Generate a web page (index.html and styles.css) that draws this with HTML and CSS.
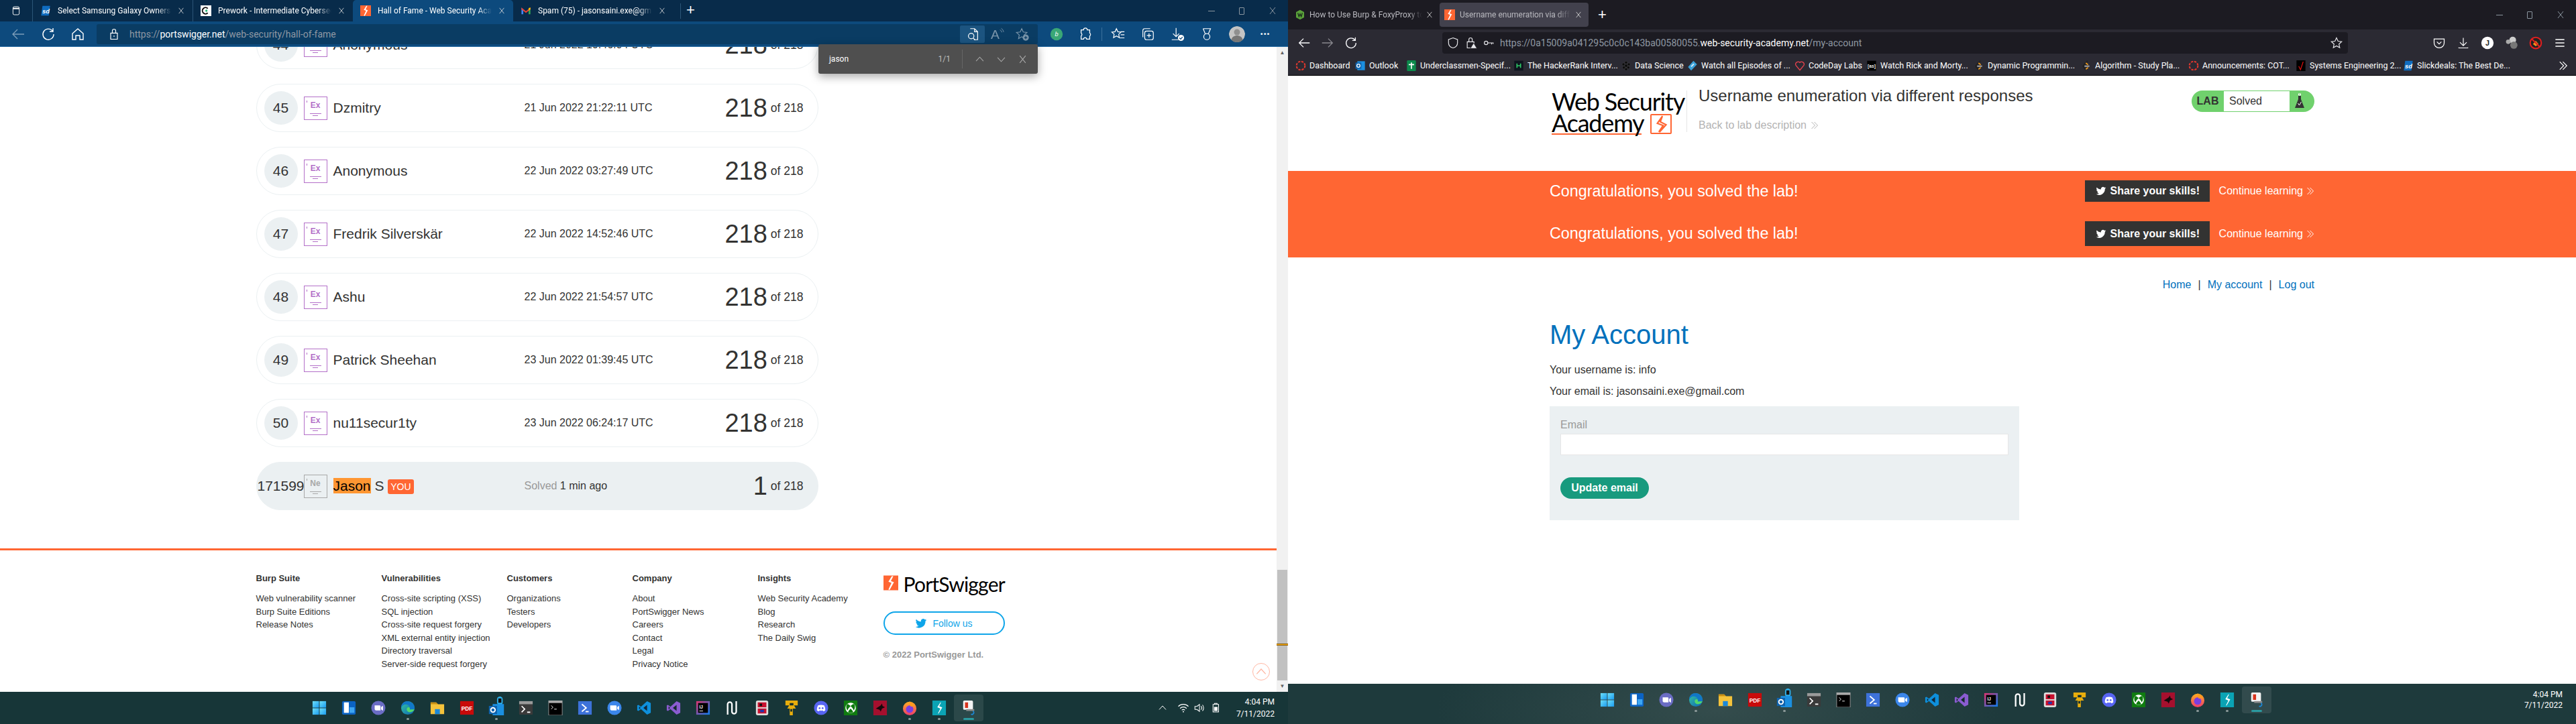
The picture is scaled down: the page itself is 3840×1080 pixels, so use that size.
FILE: index.html
```html
<!DOCTYPE html>
<html lang="en">
<head>
    <meta charset="UTF-8" />
    <title>Hall of Fame and My Account</title>
    <link rel="stylesheet" href="styles.css">
</head>
<body>
<!-- icon sprite -->
<svg class="sprite" xmlns="http://www.w3.org/2000/svg">
    <defs>
        <linearGradient id="g-win" x1="0" y1="0" x2="1" y2="1"><stop offset="0" stop-color="#6fe0f8"/><stop offset="1" stop-color="#1a9bf0"/></linearGradient>
        <linearGradient id="g-edge" x1="0" y1="0" x2="1" y2="1"><stop offset="0" stop-color="#36c8a0"/><stop offset="1" stop-color="#0b62b8"/></linearGradient>
        <linearGradient id="g-fox" x1="0" y1="0" x2="0" y2="1"><stop offset="0" stop-color="#ffb020"/><stop offset="1" stop-color="#ee3a6e"/></linearGradient>
        <linearGradient id="g-ij" x1="0" y1="0" x2="1" y2="1"><stop offset="0" stop-color="#e0336e"/><stop offset="1" stop-color="#0b7df0"/></linearGradient>
    </defs>

    <!-- browser chrome, stroke icons -->
    <symbol id="i-back" viewBox="0 0 24 24"><path d="M21 12H4M11 5l-7 7 7 7" fill="none" stroke="currentColor" stroke-width="1.4"/></symbol>
    <symbol id="i-forward" viewBox="0 0 24 24"><path d="M3 12h17M13 5l7 7-7 7" fill="none" stroke="currentColor" stroke-width="1.4"/></symbol>
    <symbol id="i-reload" viewBox="0 0 24 24"><path d="M18.5 7.5A8 8 0 1 0 20 12M19 3v5h-5" fill="none" stroke="currentColor" stroke-width="1.4"/></symbol>
    <symbol id="i-home" viewBox="0 0 24 24"><path d="M4 11l8-7 8 7v9h-5v-6H9v6H4z" fill="none" stroke="currentColor" stroke-width="1.4"/></symbol>
    <symbol id="i-lock" viewBox="0 0 24 24"><path d="M6 10h12v11H6zM9 10V6a3 3 0 0 1 6 0v4" fill="none" stroke="currentColor" stroke-width="1.4"/><circle cx="12" cy="15.500" r="1" fill="currentColor"/></symbol>
    <symbol id="i-lockwarn" viewBox="0 0 24 24"><path d="M5 10h12v11H5zM8 10V6a3 3 0 0 1 6 0v4" fill="none" stroke="currentColor" stroke-width="1.4"/><path d="M16.500 12l6 10h-12z" fill="currentColor" stroke="#1c1b22"/></symbol>
    <symbol id="i-shield" viewBox="0 0 24 24"><path d="M12 3l8 3v6c0 5-4 8-8 9-4-1-8-4-8-9V6z" fill="none" stroke="currentColor" stroke-width="1.4"/></symbol>
    <symbol id="i-key" viewBox="0 0 24 24"><circle cx="7" cy="12" r="3.500" fill="none" stroke="currentColor" stroke-width="1.500"/><path d="M10.500 12H22M18 12v3M21 12v2" fill="none" stroke="currentColor" stroke-width="1.500"/></symbol>
    <symbol id="i-star" viewBox="0 0 24 24"><path d="M12 3l2.800 6 6.400.700-4.800 4.400 1.300 6.400L12 17.300 6.300 20.500l1.300-6.400L2.800 9.700 9.200 9z" fill="none" stroke="currentColor" stroke-width="1.400"/></symbol>
    <symbol id="i-pocket" viewBox="0 0 24 24"><path d="M3 5h18v7a9 9 0 0 1-18 0z" fill="none" stroke="currentColor" stroke-width="1.500"/><path d="M8 10l4 4 4-4" fill="none" stroke="currentColor" stroke-width="1.500"/></symbol>
    <symbol id="i-download" viewBox="0 0 24 24"><path d="M12 3v14M6 11l6 6 6-6M4 20v1h16v-1" fill="none" stroke="currentColor" stroke-width="1.400"/></symbol>
    <symbol id="i-menu" viewBox="0 0 24 24"><path d="M4 6h16M4 12h16M4 18h16" fill="none" stroke="currentColor" stroke-width="1.600"/></symbol>
    <symbol id="i-docsearch" viewBox="0 0 24 24"><path d="M8 3h7l5 5v13h-6M15 3v5h5" fill="none" stroke="currentColor" stroke-width="1.300"/><circle cx="9.500" cy="15" r="4.500" fill="none" stroke="currentColor" stroke-width="1.300"/><path d="M13 18.500l3 3" stroke="currentColor" stroke-width="1.300"/></symbol>
    <symbol id="i-aloud" viewBox="0 0 24 24"><text x="1" y="20" font-family="Liberation Sans, sans-serif" font-size="21" fill="currentColor">A</text><path d="M16 5a5 5 0 0 1 3 4M18 2.500a8 8 0 0 1 4 6" fill="none" stroke="currentColor"/></symbol>
    <symbol id="i-starplus" viewBox="0 0 24 24"><path d="M11 3l2.500 5.500 6 .7-4.500 4 1.200 6L11 16.200 5.800 19.200l1.200-6-4.500-4 6-.7z" fill="none" stroke="currentColor" stroke-width="1.300"/><circle cx="17.500" cy="17.500" r="5" fill="currentColor"/><path d="M17.500 15v5M15 17.500h5" stroke="#0a3c63" stroke-width="1.300"/></symbol>
    <symbol id="i-puzzle" viewBox="0 0 24 24"><path d="M9 5a3 3 0 0 1 6 0h4v5a3 3 0 0 1 0 5v5h-5a2.500 2.500 0 0 0-5 0H5v-5a3 3 0 0 0 0-5V5z" fill="none" stroke="currentColor" stroke-width="1.400"/></symbol>
    <symbol id="i-favlist" viewBox="0 0 24 24"><path d="M9 3l2.300 5 5.200.6-3.800 3.600 1 5.300L9 15l-4.700 2.500 1-5.300L1.500 8.600 6.700 8z" fill="none" stroke="currentColor" stroke-width="1.300"/><path d="M16 8h6M16 13h6M14 18h8" stroke="currentColor" stroke-width="1.300"/></symbol>
    <symbol id="i-collect" viewBox="0 0 24 24"><rect x="7" y="7" width="14" height="14" rx="3" fill="none" stroke="currentColor" stroke-width="1.300"/><path d="M14 10.500v7M10.500 14h7M4 17V6a3 3 0 0 1 3-3h9" fill="none" stroke="currentColor" stroke-width="1.300"/></symbol>
    <symbol id="i-dlcheck" viewBox="0 0 24 24"><path d="M10 2v14M5 11l5 5 5-5M3 21h11" fill="none" stroke="currentColor" stroke-width="1.300"/><circle cx="18" cy="18" r="5" fill="currentColor"/><path d="M15.500 18l2 2 3-3.500" fill="none" stroke="#0d4a7d" stroke-width="1.400"/></symbol>
    <symbol id="i-medal" viewBox="0 0 24 24"><circle cx="12" cy="16" r="5" fill="none" stroke="currentColor" stroke-width="1.300"/><path d="M6 3h12l-3.500 8.500M6 3l3.500 8.500M9 3h6" fill="none" stroke="currentColor" stroke-width="1.300"/></symbol>
    <symbol id="i-sidebar" viewBox="0 0 24 24"><rect x="5" y="3" width="14" height="18" rx="3" fill="none" stroke="currentColor" stroke-width="1.400"/><path d="M5 7h14" stroke="currentColor" stroke-width="3"/></symbol>
    <symbol id="i-x" viewBox="0 0 12 12"><path d="M2 1l8 10M10 1L2 11" fill="none" stroke="currentColor" stroke-width="1"/></symbol>
    <symbol id="i-up" viewBox="0 0 12 12"><path d="M1 8.500l5-5.500 5 5.500" fill="none" stroke="currentColor" stroke-width="1"/></symbol>
    <symbol id="i-down" viewBox="0 0 12 12"><path d="M1 3.500L6 9l5-5.500" fill="none" stroke="currentColor" stroke-width="1"/></symbol>
    <symbol id="i-dchev" viewBox="0 0 12 12"><path d="M1.500 1l5 5-5 5M5.500 1l5 5-5 5" fill="none" stroke="currentColor" stroke-width="1"/></symbol>
    <symbol id="i-twitter" viewBox="0 0 24 24"><path d="M23 5c-.8.400-1.700.600-2.600.700.900-.600 1.600-1.400 2-2.500-.9.500-1.900.900-2.900 1.100a4.500 4.500 0 0 0-7.700 4.100C8 8.200 4.700 6.400 2.500 3.700a4.500 4.500 0 0 0 1.400 6c-.7 0-1.400-.200-2-.600 0 2.200 1.500 4 3.600 4.500-.7.200-1.400.2-2 .100.600 1.800 2.200 3.100 4.200 3.100A9 9 0 0 1 1 18.700 12.800 12.800 0 0 0 20.700 7.300c.900-.600 1.700-1.400 2.300-2.300z" fill="currentColor"/></symbol>

    <!-- favicons and bookmarks -->
    <symbol id="f-ps" viewBox="0 0 24 24"><rect width="24" height="24" fill="#ff6633"/><path d="M13.500 1L8 10l5 2-5 11 2 .5L17 11l-5-2 4-8z" fill="#fff"/></symbol>
    <symbol id="f-sd" viewBox="0 0 24 24"><path d="M5 1h17l-3 22H2z" fill="#0f6cc0"/><text x="4.500" y="18" font-family="Liberation Sans, sans-serif" font-size="14" font-weight="700" font-style="italic" fill="#fff">sd</text></symbol>
    <symbol id="f-c" viewBox="0 0 24 24"><rect width="24" height="24" fill="#fff"/><path d="M16 7a7 7 0 1 0 0 10" fill="none" stroke="#111" stroke-width="3"/><circle cx="13" cy="12" r="2.500" fill="#2cb57c"/></symbol>
    <symbol id="f-gmail" viewBox="0 0 24 24"><path d="M2 5v15h4V10z" fill="#4285f4"/><path d="M22 5v15h-4V10z" fill="#34a853"/><path d="M2 5l10 8 10-8v4l-10 8L2 9z" fill="#ea4335"/><path d="M18 6l4-1v4l-4 3z" fill="#fbbc04"/></symbol>
    <symbol id="f-hex" viewBox="0 0 24 24"><path d="M12 1l9 5v12l-9 5-9-5V6z" fill="#5aa13a"/><path d="M7 8l2.500 8L12 10l2.500 6L17 8" fill="none" stroke="#17261a" stroke-width="2"/></symbol>
    <symbol id="f-ring" viewBox="0 0 24 24"><circle cx="12" cy="12" r="9.500" fill="none" stroke="#e2382e" stroke-width="3" stroke-dasharray="5 2.500"/></symbol>
    <symbol id="f-outlook" viewBox="0 0 24 24"><rect x="5" y="2" width="17" height="20" fill="#1b8fe0"/><rect x="1" y="5" width="13" height="14" fill="#0f62ac"/><circle cx="7.500" cy="12" r="3.500" fill="none" stroke="#fff" stroke-width="2"/></symbol>
    <symbol id="f-green" viewBox="0 0 24 24"><rect x="2" width="20" height="24" rx="2" fill="#0c8a4c"/><path d="M12 5v14M6 9.500h12" stroke="#fff" stroke-width="2.500"/></symbol>
    <symbol id="f-hr" viewBox="0 0 24 24"><rect x="2" y="1" width="20" height="22" fill="#0e141e"/><path d="M8 7v10M16 7v10M8 12h8" stroke="#2ec866" stroke-width="2.500"/></symbol>
    <symbol id="f-dots" viewBox="0 0 24 24"><g fill="#0b0b0b" stroke="#555" stroke-width=".5"><circle cx="12" cy="5" r="3"/><circle cx="6" cy="9" r="3"/><circle cx="18" cy="9" r="3"/><circle cx="12" cy="12" r="3.500"/><circle cx="7" cy="16" r="3"/><circle cx="17" cy="16" r="3"/><circle cx="12" cy="20" r="3"/></g></symbol>
    <symbol id="f-diamond" viewBox="0 0 24 24"><path d="M14 1l8 8-13 14-7-8z" fill="#3aa0d8"/><path d="M8 13l6-6 2 2-6 6z" fill="#d6eefa"/></symbol>
    <symbol id="f-heart" viewBox="0 0 24 24"><path d="M12 22L3 11a5.500 5.500 0 0 1 9-6 5.500 5.500 0 0 1 9 6z" fill="none" stroke="#e8424e" stroke-width="2"/></symbol>
    <symbol id="f-bs" viewBox="0 0 24 24"><rect x="2" y="1" width="20" height="22" fill="#000"/><text x="12" y="16" text-anchor="middle" font-family="Liberation Sans, sans-serif" font-size="10" font-weight="700" fill="#eee">[as]</text></symbol>
    <symbol id="f-leet" viewBox="0 0 24 24"><path d="M15 1L6 11a3 3 0 0 0 0 4l5 6" fill="none" stroke="#222" stroke-width="3"/><path d="M8 13h11" stroke="#bbb" stroke-width="2.500"/><path d="M11 6l5 4M11 20l5-4" stroke="#f89f1b" stroke-width="2.500"/></symbol>
    <symbol id="f-vz" viewBox="0 0 24 24"><rect x="2" y="0" width="20" height="24" fill="#000"/><path d="M7 13l4 8 6-18" fill="none" stroke="#e01010" stroke-width="1.800"/></symbol>
    <symbol id="f-balls" viewBox="0 0 24 24"><circle cx="14" cy="7" r="6" fill="#ccc"/><circle cx="16" cy="16" r="6.500" fill="#777"/><circle cx="6" cy="10" r="4" fill="#aaa"/></symbol>
    <symbol id="f-noscript" viewBox="0 0 24 24"><circle cx="12" cy="12" r="10" fill="#222" stroke="#e01f1f" stroke-width="2.500"/><path d="M7 14l5-6 5 6-5 4z" fill="#f0921e"/><path d="M5 5l14 14" stroke="#e01f1f" stroke-width="2.500"/></symbol>
    <symbol id="f-j" viewBox="0 0 24 24"><circle cx="12" cy="12" r="11" fill="#fff"/><text x="12" y="17" text-anchor="middle" font-family="Liberation Sans, sans-serif" font-size="13" font-weight="700" fill="#222">J</text></symbol>
    <symbol id="f-bing" viewBox="0 0 24 24"><circle cx="12" cy="12" r="11" fill="#3aa776"/><text x="12" y="16" text-anchor="middle" font-family="Liberation Sans, sans-serif" font-size="11" font-style="italic" fill="#fff">b</text></symbol>
    <symbol id="f-face" viewBox="0 0 24 24"><circle cx="12" cy="12" r="12" fill="#c4c4c4"/><circle cx="12" cy="9" r="4.500" fill="#8f8f8f"/><path d="M3 22c1-6 5-8 9-8s8 2 9 8a12 12 0 0 1-18 0z" fill="#777"/></symbol>

    <!-- taskbar -->
    <symbol id="t-start" viewBox="0 0 24 24"><g fill="url(#g-win)"><rect x="1" y="1" width="10.500" height="10.500"/><rect x="12.500" y="1" width="10.500" height="10.500"/><rect x="1" y="12.500" width="10.500" height="10.500"/><rect x="12.500" y="12.500" width="10.500" height="10.500"/></g></symbol>
    <symbol id="t-widgets" viewBox="0 0 24 24"><rect x="1" y="1" width="22" height="22" rx="2" fill="#0b63c4"/><rect x="4" y="3" width="8" height="17" fill="#fff"/><rect x="13" y="11" width="8" height="9" fill="#3ea6f2"/></symbol>
    <symbol id="t-teams" viewBox="0 0 24 24"><circle cx="12" cy="12" r="11.500" fill="#6a6cc4"/><path d="M6 8h8a1.500 1.500 0 0 1 1.500 1.500V16H8a2 2 0 0 1-2-2zM16.500 10.500l3-2v8l-3-2z" fill="#fff"/></symbol>
    <symbol id="t-edge" viewBox="0 0 24 24"><circle cx="12" cy="12" r="11" fill="url(#g-edge)"/><path d="M23 14c-2 5-8 6-11 4-3-2-2-7 1-7 2 0 3 2 2 3.500h8z" fill="#52d86c"/><path d="M11 1C5 1 1 6 1 12c2-5 7-7 11-5 4 2 4 6 3 7.500l8-.5c.5-7-5-13-12-13z" fill="#1177c8"/></symbol>
    <symbol id="t-folder" viewBox="0 0 24 24"><path d="M1 3h9l3 3h10v16H1z" fill="#f5c33b"/><path d="M1 3h9l3 3H1z" fill="#c98f12"/><rect x="8" y="14" width="8" height="8" fill="#1b88d8"/></symbol>
    <symbol id="t-pdf" viewBox="0 0 24 24"><rect x="1" y="1" width="22" height="22" fill="#c80a0a"/><text x="12" y="16" text-anchor="middle" font-family="Liberation Sans, sans-serif" font-size="9" font-weight="700" fill="#fff">PDF</text></symbol>
    <symbol id="t-outlook" viewBox="0 0 24 30"><rect x="13" y="0" width="9" height="14" rx="4.500" fill="#2fb4f0"/><rect x="15" y="3" width="5" height="7" fill="#111"/><rect x="6" y="12" width="18" height="18" fill="#1b8fe0"/><rect x="0" y="15" width="13" height="13" fill="#0f62ac"/><circle cx="6.500" cy="21.500" r="3.500" fill="none" stroke="#fff" stroke-width="2"/></symbol>
    <symbol id="t-term" viewBox="0 0 24 24"><rect x="1" y="1" width="22" height="22" rx="1" fill="#3a3a3a"/><rect x="1" y="1" width="22" height="5" fill="#9a9a9a"/><path d="M5 9l5 5-5 5" fill="none" stroke="#fff" stroke-width="1.800"/><path d="M14 19h5" stroke="#fff" stroke-width="2"/></symbol>
    <symbol id="t-cmd" viewBox="0 0 24 24"><rect x="1" y="0" width="22" height="24" fill="#000" stroke="#999"/><rect x="1" y="0" width="22" height="4" fill="#aaa"/><path d="M5 8l3 3-3 3M10 14h4" fill="none" stroke="#fff"/></symbol>
    <symbol id="t-ps" viewBox="0 0 24 24"><path d="M1 1h22v22H1z" fill="#3d72da"/><path d="M7 6l7 6-7 6" fill="none" stroke="#fff" stroke-width="2"/><path d="M13 18h5" stroke="#fff" stroke-width="2"/></symbol>
    <symbol id="t-zoom" viewBox="0 0 24 24"><circle cx="12" cy="12" r="11.500" fill="#3b86ea"/><path d="M5 8h9a1.500 1.500 0 0 1 1.500 1.500V16H7a2 2 0 0 1-2-2zM16.500 10.500l3-2v7l-3-2z" fill="#fff"/></symbol>
    <symbol id="t-vscode" viewBox="0 0 24 24"><path d="M17 1l6 3v16l-6 3L7 14l-4 3-2-1V8l2-1 4 3z" fill="#0e90dc"/><path d="M17 7l-6 5 6 5z" fill="#11283c"/><path d="M4 9.500v5l2.500-2.500z" fill="#11283c"/></symbol>
    <symbol id="t-vs" viewBox="0 0 24 24"><path d="M17 1l6 3v16l-6 3L7 14l-4 3-2-1V8l2-1 4 3z" fill="#8a5cd0"/><path d="M17 7l-6 5 6 5z" fill="#142a2c"/><path d="M4 9.500v5l2.500-2.500z" fill="#142a2c"/></symbol>
    <symbol id="t-ij" viewBox="0 0 24 24"><rect x="1" y="1" width="22" height="22" fill="url(#g-ij)"/><rect x="4" y="4" width="16" height="16" fill="#000"/><text x="6" y="13" font-family="Liberation Sans, sans-serif" font-size="7" font-weight="700" fill="#fff">IJ</text><path d="M6 17h6" stroke="#fff"/></symbol>
    <symbol id="t-wave" viewBox="0 0 24 24"><path d="M4 23V6a3.500 3.500 0 0 1 7 0v12a3.500 3.500 0 0 0 7 0 V1" fill="none" stroke="#fff" stroke-width="2.500"/></symbol>
    <symbol id="t-tool" viewBox="0 0 24 24"><rect x="2" y="0" width="20" height="24" rx="3" fill="#ddd"/><rect x="5" y="3" width="14" height="8" fill="#c8102e"/><rect x="5" y="13" width="14" height="8" fill="#c8102e"/><rect x="9" y="15" width="6" height="4" fill="#2233aa"/><rect x="8" y="5" width="4" height="4" fill="#111"/></symbol>
    <symbol id="t-yellow" viewBox="0 0 24 24"><path d="M2 0h20v8h-6l3 5h-5v11H9V13H5l3-5H2z" fill="#e8ae0c"/><path d="M9 4h6v4H9zM10 14h3v4h-3z" fill="#16302f"/></symbol>
    <symbol id="t-discord" viewBox="0 0 24 24"><circle cx="12" cy="12" r="11.500" fill="#5865f2"/><path d="M7 8c3-1.300 7-1.300 10 0 1.300 2.500 2 5 1.800 8-1.200.9-2.400 1.300-3.400 1.500l-.8-1.300c-1.700.4-3.500.4-5.200 0l-.8 1.300c-1-.2-2.200-.6-3.400-1.500C5 13 5.700 10.500 7 8z" fill="#fff"/><circle cx="9.500" cy="12.500" r="1.500" fill="#5865f2"/><circle cx="14.500" cy="12.500" r="1.500" fill="#5865f2"/></symbol>
    <symbol id="t-xbox" viewBox="0 0 24 24"><rect x="1" y="0" width="22" height="24" fill="#107c10"/><circle cx="12" cy="12" r="8.500" fill="#fff"/><path d="M12 9C9 6 7 5 6 6c-2 3-1 8 1 10 1-3 3-5 5-7zM12 9c3-3 5-4 6-3 2 3 1 8-1 10-1-3-3-5-5-7zM12 13c-2 2-4 4-4 6 2 1.500 6 1.500 8 0 0-2-2-4-4-6z" fill="#107c10"/></symbol>
    <symbol id="t-maroon" viewBox="0 0 24 24"><rect x="1" y="0" width="22" height="24" fill="#a5102e"/><path d="M5 13l8-5 2-3 1 4 4 2-5 2-2 5-2-3z" fill="#14090b"/></symbol>
    <symbol id="t-firefox" viewBox="0 0 24 24"><circle cx="12" cy="13" r="11" fill="url(#g-fox)"/><circle cx="12" cy="14" r="6" fill="#7a3ee0"/><path d="M12 1c3 3 6 3 9 7l-7 2c-2-3-3-6-2-9z" fill="#ff9a1f"/></symbol>
    <symbol id="t-teal" viewBox="0 0 24 24"><rect x="1" y="0" width="22" height="24" fill="#0ba3b4"/><path d="M14 3l-5 8 5 2-4 8 1 .3 6-10-5-2 3-6z" fill="#fff"/></symbol>
    <symbol id="t-paint" viewBox="0 0 24 24"><rect x="3" y="0" width="16" height="15" rx="2" fill="#f4f4f4"/><rect x="6" y="3" width="5" height="9" fill="#d8341e"/><rect x="8" y="14" width="13" height="3" fill="#8d8d8d"/><path d="M19 17c2 2 2 3 0 5-1 1-2 1-3 0" fill="none" stroke="#1b88d8" stroke-width="2"/></symbol>

    <!-- system tray -->
    <symbol id="t-wifi" viewBox="0 0 24 24"><path d="M2 9a14 14 0 0 1 20 0M5.500 13a9 9 0 0 1 13 0M9 16.500a4 4 0 0 1 6 0" fill="none" stroke="currentColor" stroke-width="1.500"/><circle cx="12" cy="19.500" r="1.300" fill="currentColor"/></symbol>
    <symbol id="t-sound" viewBox="0 0 24 24"><path d="M3 9h4l5-4v14l-5-4H3z" fill="none" stroke="currentColor" stroke-width="1.400"/><path d="M15 8.500a5 5 0 0 1 0 7M18 6a9 9 0 0 1 0 12" fill="none" stroke="currentColor" stroke-width="1.400"/></symbol>
    <symbol id="t-battery" viewBox="0 0 24 24"><path d="M7 5h11v15H7zM10 3h5v2h-5z" fill="none" stroke="currentColor" stroke-width="1.400"/><rect x="9" y="10" width="7" height="8" fill="currentColor"/></symbol>
</svg>

<div class="desktop">

    <!-- left window, Edge -->
    <section class="win edge">
        <div class="edge-tabs">
            <div class="edge-side"><svg class="ic16"><use href="#i-sidebar"/></svg></div>
            <div class="edge-tab sep"><svg class="fav"><use href="#f-sd"/></svg><span class="tab-title">Select Samsung Galaxy Owners: Sa</span><svg class="tab-x"><use href="#i-x"/></svg></div>
            <div class="edge-tab sep"><svg class="fav"><use href="#f-c"/></svg><span class="tab-title">Prework - Intermediate Cybersecurity</span><svg class="tab-x"><use href="#i-x"/></svg></div>
            <div class="edge-tab active"><svg class="fav"><use href="#f-ps"/></svg><span class="tab-title">Hall of Fame - Web Security Academy</span><svg class="tab-x"><use href="#i-x"/></svg></div>
            <div class="edge-tab"><svg class="fav"><use href="#f-gmail"/></svg><span class="tab-title">Spam (75) - jasonsaini.exe@gmail.com</span><svg class="tab-x"><use href="#i-x"/></svg></div>
            <div class="new-tab edge-new">+</div>
            <div class="win-btns edge-btns">
                <span class="win-min"></span><span class="win-max"></span><svg class="win-x"><use href="#i-x"/></svg>
            </div>
        </div>
        <div class="edge-bar">
            <svg class="ic24 dim nav-back"><use href="#i-back"/></svg>
            <svg class="ic24 nav-reload"><use href="#i-reload"/></svg>
            <svg class="ic24 nav-home"><use href="#i-home"/></svg>
            <div class="edge-url">
                <svg class="ic20 url-lock"><use href="#i-lock"/></svg>
                <span class="url-text"><i>https://</i>portswigger.net<i>/web-security/hall-of-fame</i></span>
                <span class="url-tools">
                    <span class="url-tool on"><svg class="ic22"><use href="#i-docsearch"/></svg></span>
                    <span class="url-tool dim"><svg class="ic22"><use href="#i-aloud"/></svg></span>
                    <span class="url-tool dim"><svg class="ic22"><use href="#i-starplus"/></svg></span>
                </span>
            </div>
            <div class="edge-extras">
                <svg class="ic20"><use href="#f-bing"/></svg>
                <svg class="ic22"><use href="#i-puzzle"/></svg>
                <span class="extras-sep"></span>
                <svg class="ic22"><use href="#i-favlist"/></svg>
                <svg class="ic22"><use href="#i-collect"/></svg>
                <svg class="ic22"><use href="#i-dlcheck"/></svg>
                <svg class="ic22"><use href="#i-medal"/></svg>
                <svg class="ic24 round"><use href="#f-face"/></svg>
                <span class="dots">&middot;&middot;&middot;</span>
            </div>
        </div>
        <div class="find-bar">
            <span class="find-term">jason</span>
            <span class="find-count">1/1</span>
            <span class="find-sep"></span>
            <svg class="find-ic"><use href="#i-up"/></svg>
            <svg class="find-ic"><use href="#i-down"/></svg>
            <svg class="find-ic"><use href="#i-x"/></svg>
        </div>

        <div class="edge-body">
            <main class="hof-page">
                <div class="container hof-list">
                    <div class="hof-row">
                        <div class="rank">44</div>
                        <div class="badge"><b>Ex</b><i></i><u></u></div>
                        <div class="who">Anonymous</div>
                        <div class="when">21 Jun 2022 19:46:04 UTC</div>
                        <div class="score"><strong>218</strong><span>of 218</span></div>
                    </div>
                    <div class="hof-row">
                        <div class="rank">45</div>
                        <div class="badge"><b>Ex</b><i></i><u></u></div>
                        <div class="who">Dzmitry</div>
                        <div class="when">21 Jun 2022 21:22:11 UTC</div>
                        <div class="score"><strong>218</strong><span>of 218</span></div>
                    </div>
                    <div class="hof-row">
                        <div class="rank">46</div>
                        <div class="badge"><b>Ex</b><i></i><u></u></div>
                        <div class="who">Anonymous</div>
                        <div class="when">22 Jun 2022 03:27:49 UTC</div>
                        <div class="score"><strong>218</strong><span>of 218</span></div>
                    </div>
                    <div class="hof-row">
                        <div class="rank">47</div>
                        <div class="badge"><b>Ex</b><i></i><u></u></div>
                        <div class="who">Fredrik Silverskär</div>
                        <div class="when">22 Jun 2022 14:52:46 UTC</div>
                        <div class="score"><strong>218</strong><span>of 218</span></div>
                    </div>
                    <div class="hof-row">
                        <div class="rank">48</div>
                        <div class="badge"><b>Ex</b><i></i><u></u></div>
                        <div class="who">Ashu</div>
                        <div class="when">22 Jun 2022 21:54:57 UTC</div>
                        <div class="score"><strong>218</strong><span>of 218</span></div>
                    </div>
                    <div class="hof-row">
                        <div class="rank">49</div>
                        <div class="badge"><b>Ex</b><i></i><u></u></div>
                        <div class="who">Patrick Sheehan</div>
                        <div class="when">23 Jun 2022 01:39:45 UTC</div>
                        <div class="score"><strong>218</strong><span>of 218</span></div>
                    </div>
                    <div class="hof-row">
                        <div class="rank">50</div>
                        <div class="badge"><b>Ex</b><i></i><u></u></div>
                        <div class="who">nu11secur1ty</div>
                        <div class="when">23 Jun 2022 06:24:17 UTC</div>
                        <div class="score"><strong>218</strong><span>of 218</span></div>
                    </div>
                    <div class="hof-row me">
                        <div class="rank">171599</div>
                        <div class="badge newbie"><b>Ne</b><i></i><u></u></div>
                        <div class="who"><mark>Jason</mark> S <span class="you">YOU</span></div>
                        <div class="when"><em>Solved</em> 1 min ago</div>
                        <div class="score"><strong>1</strong><span>of 218</span></div>
                    </div>
                </div>

                <footer class="site-foot">
                    <div class="container foot-grid">
                        <div class="foot-col">
                            <h4>Burp Suite</h4>
                            <a>Web vulnerability scanner</a>
                            <a>Burp Suite Editions</a>
                            <a>Release Notes</a>
                        </div>
                        <div class="foot-col">
                            <h4>Vulnerabilities</h4>
                            <a>Cross-site scripting (XSS)</a>
                            <a>SQL injection</a>
                            <a>Cross-site request forgery</a>
                            <a>XML external entity injection</a>
                            <a>Directory traversal</a>
                            <a>Server-side request forgery</a>
                        </div>
                        <div class="foot-col">
                            <h4>Customers</h4>
                            <a>Organizations</a>
                            <a>Testers</a>
                            <a>Developers</a>
                        </div>
                        <div class="foot-col">
                            <h4>Company</h4>
                            <a>About</a>
                            <a>PortSwigger News</a>
                            <a>Careers</a>
                            <a>Contact</a>
                            <a>Legal</a>
                            <a>Privacy Notice</a>
                        </div>
                        <div class="foot-col">
                            <h4>Insights</h4>
                            <a>Web Security Academy</a>
                            <a>Blog</a>
                            <a>Research</a>
                            <a>The Daily Swig</a>
                        </div>
                        <div class="foot-brand">
                            <div class="ps-logo"><svg class="ps-mark"><use href="#f-ps"/></svg><span>PortSwigger</span></div>
                            <div class="follow"><svg class="ic18"><use href="#i-twitter"/></svg>Follow us</div>
                            <div class="copy">&copy; 2022 PortSwigger Ltd.</div>
                        </div>
                    </div>
                </footer>
                <div class="to-top"><svg class="to-top-ic"><use href="#i-up"/></svg></div>
            </main>
            <aside class="scrollbar">
                <div class="scroll-arrow">&#9650;</div>
                <div class="scroll-thumb"></div>
                <div class="scroll-arrow">&#9660;</div>
                <div class="scroll-mark"></div>
            </aside>
        </div>

        <div class="taskbar">
            <div></div>
            <div class="tb-icons">
                <span class="tb-item"><svg><use href="#t-start"/></svg></span>
                <span class="tb-item"><svg><use href="#t-widgets"/></svg></span>
                <span class="tb-item"><svg><use href="#t-teams"/></svg></span>
                <span class="tb-item run"><svg><use href="#t-edge"/></svg></span>
                <span class="tb-item"><svg><use href="#t-folder"/></svg></span>
                <span class="tb-item"><svg><use href="#t-pdf"/></svg></span>
                <span class="tb-item run"><svg class="tb-tall"><use href="#t-outlook"/></svg></span>
                <span class="tb-item"><svg><use href="#t-term"/></svg></span>
                <span class="tb-item"><svg><use href="#t-cmd"/></svg></span>
                <span class="tb-item"><svg><use href="#t-ps"/></svg></span>
                <span class="tb-item"><svg><use href="#t-zoom"/></svg></span>
                <span class="tb-item"><svg><use href="#t-vscode"/></svg></span>
                <span class="tb-item"><svg><use href="#t-vs"/></svg></span>
                <span class="tb-item"><svg><use href="#t-ij"/></svg></span>
                <span class="tb-item"><svg><use href="#t-wave"/></svg></span>
                <span class="tb-item"><svg><use href="#t-tool"/></svg></span>
                <span class="tb-item"><svg><use href="#t-yellow"/></svg></span>
                <span class="tb-item"><svg><use href="#t-discord"/></svg></span>
                <span class="tb-item"><svg><use href="#t-xbox"/></svg></span>
                <span class="tb-item"><svg><use href="#t-maroon"/></svg></span>
                <span class="tb-item run"><svg><use href="#t-firefox"/></svg></span>
                <span class="tb-item run"><svg><use href="#t-teal"/></svg></span>
                <span class="tb-item current"><svg><use href="#t-paint"/></svg></span>
            </div>
            <div class="tb-tray">
                <svg class="tray-chev"><use href="#i-up"/></svg>
                <svg class="tray-ic"><use href="#t-wifi"/></svg>
                <svg class="tray-ic"><use href="#t-sound"/></svg>
                <svg class="tray-ic"><use href="#t-battery"/></svg>
                <div class="clock">4:04 PM<br>7/11/2022</div>
            </div>
        </div>
    </section>

    <!-- right window, Firefox -->
    <section class="win fox">
        <div class="fox-tabs">
            <div class="fox-tab"><svg class="fav"><use href="#f-hex"/></svg><span class="tab-title">How to Use Burp &amp; FoxyProxy to Intercept</span><svg class="tab-x"><use href="#i-x"/></svg></div>
            <div class="fox-tab active"><svg class="fav"><use href="#f-ps"/></svg><span class="tab-title">Username enumeration via different</span><svg class="tab-x"><use href="#i-x"/></svg></div>
            <div class="new-tab fox-new">+</div>
            <div class="win-btns fox-btns">
                <span class="win-min"></span><span class="win-max"></span><svg class="win-x"><use href="#i-x"/></svg>
            </div>
        </div>
        <div class="fox-bar">
            <svg class="ic22 fox-nav"><use href="#i-back"/></svg>
            <svg class="ic22 fox-nav dim"><use href="#i-forward"/></svg>
            <svg class="ic22 fox-nav"><use href="#i-reload"/></svg>
            <div class="fox-url">
                <svg class="ic20"><use href="#i-shield"/></svg>
                <svg class="ic20"><use href="#i-lockwarn"/></svg>
                <svg class="ic18"><use href="#i-key"/></svg>
                <span class="url-text fox-url-text"><i>https://0a15009a041295c0c0c143ba00580055.</i>web-security-academy.net<i>/my-account</i></span>
                <svg class="ic20 fox-star"><use href="#i-star"/></svg>
            </div>
            <div class="fox-extras">
                <svg class="ic20"><use href="#i-pocket"/></svg>
                <svg class="ic20"><use href="#i-download"/></svg>
                <svg class="ic20"><use href="#f-j"/></svg>
                <svg class="ic20"><use href="#f-balls"/></svg>
                <svg class="ic20"><use href="#f-noscript"/></svg>
                <svg class="ic20"><use href="#i-menu"/></svg>
            </div>
        </div>
        <div class="bookmarks">
            <span class="bm"><svg><use href="#f-ring"/></svg>Dashboard</span>
            <span class="bm"><svg><use href="#f-outlook"/></svg>Outlook</span>
            <span class="bm"><svg><use href="#f-green"/></svg>Underclassmen-Specif...</span>
            <span class="bm"><svg><use href="#f-hr"/></svg>The HackerRank Interv...</span>
            <span class="bm"><svg><use href="#f-dots"/></svg>Data Science</span>
            <span class="bm"><svg><use href="#f-diamond"/></svg>Watch all Episodes of ...</span>
            <span class="bm"><svg><use href="#f-heart"/></svg>CodeDay Labs</span>
            <span class="bm"><svg><use href="#f-bs"/></svg>Watch Rick and Morty...</span>
            <span class="bm"><svg><use href="#f-leet"/></svg>Dynamic Programmin...</span>
            <span class="bm"><svg><use href="#f-leet"/></svg>Algorithm - Study Pla...</span>
            <span class="bm"><svg><use href="#f-ring"/></svg>Announcements: COT...</span>
            <span class="bm"><svg><use href="#f-vz"/></svg>Systems Engineering 2...</span>
            <span class="bm"><svg><use href="#f-sd"/></svg>Slickdeals: The Best De...</span>
            <svg class="bm-more"><use href="#i-dchev"/></svg>
        </div>

        <main class="lab-page">
            <div class="container lab-head">
                <div class="academy-logo">
                    <div>Web Security</div>
                    <div class="academy-line2">
                        <span class="academy-word">Academy</span>
                        <span class="academy-bolt"><svg viewBox="0 0 24 24"><path d="M14 1L7 11l8 3-6 9M14 1l-3 8 8 4-9 10" fill="none" stroke="#ff6633" stroke-width="2"/></svg></span>
                    </div>
                </div>
                <div class="lab-title">
                    <h2>Username enumeration via different responses</h2>
                    <a class="lab-back">Back to lab description <svg class="ic12"><use href="#i-dchev"/></svg></a>
                </div>
                <div class="lab-status">
                    <span class="lab-tag">LAB</span>
                    <span class="lab-state">Solved</span>
                    <svg class="lab-flask" viewBox="0 0 16 24"><path d="M6 1h4M6.500 1v2h3V1" fill="none" stroke="#fff"/><path d="M6 4h4v5l5 13H1L6 9z" fill="#333"/><path d="M5.500 15l2 3 3-5" fill="none" stroke="#fff"/></svg>
                </div>
            </div>

            <div class="solved-banner">
                <div class="container solved-row first">
                    <h4>Congratulations, you solved the lab!</h4>
                    <div class="solved-links">
                        <a class="share"><svg class="ic16"><use href="#i-twitter"/></svg>Share your skills!</a>
                        <a class="cont">Continue learning <svg class="ic12"><use href="#i-dchev"/></svg></a>
                    </div>
                </div>
                <div class="container solved-row second">
                    <h4>Congratulations, you solved the lab!</h4>
                    <div class="solved-links">
                        <a class="share"><svg class="ic16"><use href="#i-twitter"/></svg>Share your skills!</a>
                        <a class="cont">Continue learning <svg class="ic12"><use href="#i-dchev"/></svg></a>
                    </div>
                </div>
            </div>

            <div class="container account">
                <nav class="acct-nav"><a>Home</a><span>|</span><a>My account</a><span>|</span><a>Log out</a></nav>
                <h1>My Account</h1>
                <p>Your username is: info</p>
                <p>Your email is: jasonsaini.exe@gmail.com</p>
                <form class="email-form">
                    <label>Email</label>
                    <input type="email">
                    <button type="button">Update email</button>
                </form>
            </div>
        </main>

        <div class="taskbar tall">
            <div></div>
            <div class="tb-icons">
                <span class="tb-item"><svg><use href="#t-start"/></svg></span>
                <span class="tb-item"><svg><use href="#t-widgets"/></svg></span>
                <span class="tb-item"><svg><use href="#t-teams"/></svg></span>
                <span class="tb-item run"><svg><use href="#t-edge"/></svg></span>
                <span class="tb-item"><svg><use href="#t-folder"/></svg></span>
                <span class="tb-item"><svg><use href="#t-pdf"/></svg></span>
                <span class="tb-item run"><svg class="tb-tall"><use href="#t-outlook"/></svg></span>
                <span class="tb-item"><svg><use href="#t-term"/></svg></span>
                <span class="tb-item"><svg><use href="#t-cmd"/></svg></span>
                <span class="tb-item"><svg><use href="#t-ps"/></svg></span>
                <span class="tb-item"><svg><use href="#t-zoom"/></svg></span>
                <span class="tb-item"><svg><use href="#t-vscode"/></svg></span>
                <span class="tb-item"><svg><use href="#t-vs"/></svg></span>
                <span class="tb-item"><svg><use href="#t-ij"/></svg></span>
                <span class="tb-item"><svg><use href="#t-wave"/></svg></span>
                <span class="tb-item"><svg><use href="#t-tool"/></svg></span>
                <span class="tb-item"><svg><use href="#t-yellow"/></svg></span>
                <span class="tb-item"><svg><use href="#t-discord"/></svg></span>
                <span class="tb-item"><svg><use href="#t-xbox"/></svg></span>
                <span class="tb-item"><svg><use href="#t-maroon"/></svg></span>
                <span class="tb-item run"><svg><use href="#t-firefox"/></svg></span>
                <span class="tb-item run"><svg><use href="#t-teal"/></svg></span>
                <span class="tb-item current"><svg><use href="#t-paint"/></svg></span>
            </div>
            <div class="tb-tray">
                <div class="clock">4:04 PM<br>7/11/2022</div>
            </div>
        </div>
    </section>
</div>
</body>
</html>
```

FILE: styles.css
```css
* {
    box-sizing: border-box;
}
html, body {
    margin: 0;
    height: 1080px;
    overflow: hidden;
    background: #000;
}
body {
    font-family: "Liberation Sans", Arial, sans-serif;
    font-size: 16px;
    color: #333332;
}
.sprite {
    position: absolute;
    width: 0;
    height: 0;
}
.desktop {
    display: flex;
    width: 3840px;
    height: 1080px;
}
.win {
    position: relative;
    display: flex;
    flex-direction: column;
    width: 1920px;
    height: 1080px;
    overflow: hidden;
}
.container {
    width: 1140px;
    margin: 0 auto;
}
.ic12 { width: 12px; height: 12px; }
.ic16 { width: 16px; height: 16px; }
.ic18 { width: 18px; height: 18px; }
.ic20 { width: 20px; height: 20px; }
.ic22 { width: 22px; height: 22px; }
.ic24 { width: 24px; height: 24px; }
.dim { opacity: .45; }
.round { border-radius: 50%; }

/* browser chrome, shared */
.edge-tabs, .edge-bar, .fox-tabs, .fox-bar, .bookmarks, .find-bar, .clock {
    font-family: Roboto, "Open Sans", sans-serif;
    color: #fff;
}
.fav {
    flex: none;
    width: 16px;
    height: 16px;
}
.tab-title {
    flex: 1;
    min-width: 0;
    font-size: 12px;
    white-space: nowrap;
    overflow: hidden;
    -webkit-mask-image: linear-gradient(to right, #000 88%, transparent);
    mask-image: linear-gradient(to right, #000 88%, transparent);
}
.tab-x {
    flex: none;
    width: 10px;
    height: 10px;
    color: #ddd;
}
.new-tab {
    font-family: "Liberation Sans", sans-serif;
    font-weight: 400;
    font-size: 22px;
}
.win-btns {
    display: flex;
    align-items: center;
    gap: 36px;
    margin-left: auto;
    color: #8b96a0;
}
.win-min {
    width: 10px;
    height: 1px;
    background: currentColor;
}
.win-max {
    width: 8px;
    height: 11px;
    border: 1px solid currentColor;
    border-radius: 1px;
}
.win-x {
    width: 12px;
    height: 12px;
}
.url-text {
    font-size: 14px;
    white-space: nowrap;
    color: #fff;
}
.url-text i {
    font-style: normal;
    color: #8f98a3;
}

/* edge */
.edge-tabs {
    display: flex;
    align-items: center;
    height: 32px;
    background: #082b4a;
}
.edge-side {
    display: flex;
    justify-content: center;
    width: 48px;
}
.edge-tab {
    display: flex;
    align-items: center;
    gap: 10px;
    width: 239px;
    height: 32px;
    padding: 0 12px 0 11px;
}
.edge-tab.sep {
    border-left: 1px solid #2b5578;
}
.edge-tab.active {
    background: #0d4a7d;
    border-radius: 5px 5px 0 0;
}
.edge-new {
    margin-left: 10px;
    padding-bottom: 3px;
    padding-left: 8px;
    border-left: 1px solid #2b5578;
    line-height: 20px;
}
.edge-btns {
    padding-right: 17px;
}
.edge-bar {
    display: flex;
    align-items: center;
    height: 38px;
    background: #0d4a7d;
    border-bottom: 1px solid #2a6fa5;
}
.nav-back { margin-left: 15px; }
.nav-reload { margin-left: 21px; }
.nav-home { margin-left: 20px; }
.edge-url {
    display: flex;
    align-items: center;
    width: 1403px;
    height: 30px;
    margin-left: 16px;
    padding-left: 16px;
    background: #0a3c63;
    border-radius: 3px;
}
.url-lock { flex: none; }
.edge-url .url-text {
    margin-left: 13px;
}
.url-tools {
    display: flex;
    align-items: center;
    margin-left: auto;
    padding-right: 5px;
}
.url-tool {
    display: flex;
    align-items: center;
    justify-content: center;
    width: 37px;
    height: 26px;
}
.url-tool.on {
    background: #1c5480;
    border-radius: 2px;
}
.edge-extras {
    display: flex;
    align-items: center;
    flex: 1;
    padding-left: 18px;
    gap: 22px;
}
.extras-sep {
    width: 1px;
    height: 20px;
    margin: 0 -9px;
    background: #3c709c;
}
.dots {
    font-size: 18px;
    font-weight: 700;
    line-height: 10px;
    letter-spacing: -.5px;
}
.find-bar {
    position: absolute;
    top: 66px;
    left: 1220px;
    display: flex;
    align-items: center;
    width: 327px;
    height: 44px;
    padding: 0 16px;
    background: #4f4f4f;
    border-radius: 3px;
    box-shadow: 0 4px 14px rgba(0, 0, 0, .35);
    z-index: 5;
}
.find-term {
    font-size: 12px;
}
.find-count {
    margin-left: auto;
    font-size: 12px;
    color: #bdbdbd;
}
.find-sep {
    width: 1px;
    height: 28px;
    margin: 0 19px 0 17px;
    background: #666;
}
.find-ic {
    width: 13px;
    height: 13px;
    margin-right: 19px;
    color: #a8a8a8;
}
.find-ic:last-child {
    margin-right: 0;
}

.edge-body {
    position: relative;
    display: flex;
    flex: 1;
    min-height: 0;
    background: #fff;
}
.hof-page {
    position: relative;
    flex: 1;
    min-width: 0;
    overflow: hidden;
}
/* page is scrolled, row 44 sits under the toolbar */
.hof-list {
    display: flex;
    flex-direction: column;
    gap: 22px;
    margin-top: -39px;
}
.hof-row {
    display: flex;
    align-items: center;
    width: 838px;
    height: 72px;
    padding: 0 21px 0 11px;
    border: 1px solid #ebf0f2;
    border-radius: 36px;
}
.hof-row.me {
    background: #ebf0f2;
}
.rank {
    display: flex;
    flex: none;
    align-items: center;
    justify-content: center;
    width: 50px;
    height: 50px;
    font-size: 21px;
    background: #ebf0f2;
    border-radius: 50%;
    white-space: nowrap;
}
.badge {
    position: relative;
    display: flex;
    flex: none;
    flex-direction: column;
    align-items: center;
    width: 35px;
    height: 35px;
    margin-left: 9px;
    border: 1px solid #b36fc8;
    color: #b36fc8;
}
.badge::before {
    content: "";
    position: absolute;
    top: 5px;
    left: 3px;
    width: 1px;
    height: 3px;
    background: currentColor;
}
.badge b {
    margin-top: 3px;
    font-size: 12px;
    line-height: 18px;
    font-weight: 700;
}
.badge i {
    width: 17px;
    height: 1px;
    margin-top: 3px;
    background: currentColor;
}
.badge u {
    width: 8px;
    height: 1px;
    margin-top: 2px;
    background: currentColor;
}
.badge.newbie {
    color: #a8a8a8;
    border-color: #a8a8a8;
}
.who {
    flex: none;
    width: 285px;
    margin-left: 9px;
    font-size: 21px;
    white-space: nowrap;
}
mark {
    background: #ff9632;
    color: #000;
}
.you {
    display: inline-block;
    padding: 0 4px;
    font-size: 14px;
    line-height: 22px;
    color: #fff;
    background: #ff6633;
    border-radius: 3px;
    vertical-align: 1px;
}
.when {
    flex: none;
    font-size: 16px;
}
.when em {
    font-style: normal;
    color: #999;
}
.score {
    display: flex;
    align-items: center;
    justify-content: flex-end;
    flex: 1;
    gap: 5px;
}
.score strong {
    font-size: 38px;
    font-weight: 400;
    line-height: 44px;
}
.score span {
    font-size: 17.5px;
}

.site-foot {
    margin-top: 57px;
    padding-top: 32px;
    border-top: 3px solid #ff6633;
}
.foot-grid {
    display: grid;
    grid-template-columns: repeat(5, 187px) 1fr;
}
.foot-col h4 {
    margin: 0 0 10.5px;
    font-size: 13px;
    line-height: 19.5px;
}
.foot-col a {
    display: block;
    font-size: 13px;
    line-height: 19.5px;
}
.foot-brand {
    padding-top: 5px;
}
.ps-logo {
    display: flex;
    align-items: flex-start;
    height: 29px;
    gap: 8px;
    color: #000;
}
.ps-mark {
    width: 22px;
    height: 23px;
}
.ps-logo span {
    font-family: Lato, sans-serif;
    font-size: 30px;
    line-height: 26px;
    letter-spacing: -.8px;
}
.follow {
    display: flex;
    align-items: center;
    justify-content: center;
    gap: 8px;
    width: 181px;
    height: 35px;
    margin-top: 25px;
    font-size: 14px;
    color: #0ea5e9;
    border: 2px solid #0ea5e9;
    border-radius: 18px;
}
.copy {
    margin-top: 19.5px;
    font-size: 13px;
    font-weight: 700;
    line-height: 19.5px;
    color: #999;
}
.to-top {
    position: absolute;
    right: 10px;
    bottom: 17px;
    display: flex;
    align-items: center;
    justify-content: center;
    width: 26px;
    height: 26px;
    color: #ffb7a3;
    border: 1px solid #ffb7a3;
    border-radius: 50%;
}
.to-top-ic {
    width: 16px;
    height: 16px;
}
.scrollbar {
    position: relative;
    display: flex;
    flex: none;
    flex-direction: column;
    width: 17px;
    background: #f1f1f1;
}
.scroll-arrow {
    flex: none;
    height: 17px;
    font-size: 8px;
    line-height: 17px;
    text-align: center;
    color: #606060;
}
.scroll-thumb {
    flex: none;
    width: 15px;
    height: 165px;
    margin: auto 0 0 1px;
    background: #c1c1c1;
}
.scroll-mark {
    position: absolute;
    top: 890px;
    left: 0;
    width: 17px;
    height: 3px;
    background: #ffb300;
    border-top: 1px solid #8a5a00;
    border-bottom: 1px solid #8a5a00;
}

/* firefox */
.fox-tabs {
    display: flex;
    align-items: center;
    height: 44px;
    padding-left: 10px;
    background: #1c1b22;
}
.fox-tab {
    display: flex;
    align-items: center;
    gap: 6px;
    width: 216px;
    height: 36px;
    padding: 0 10px 0 0;
    color: #b9b9bf;
}
.fox-tab .tab-title {
    padding-right: 4px;
}
.fox-tab.active {
    width: 222px;
    padding-left: 7px;
    background: #42414d;
    border-radius: 4px;
    gap: 7px;
}
.fox-new {
    margin-left: 14px;
    line-height: 20px;
}
.fox-btns {
    padding-right: 17px;
}
.fox-bar {
    display: flex;
    align-items: center;
    height: 40px;
    background: #2b2a33;
}
.fox-nav {
    margin-left: 13px;
    color: #fbfbfe;
}
.fox-url {
    display: flex;
    align-items: center;
    gap: 7px;
    width: 1350px;
    height: 32px;
    margin-left: 125px;
    padding: 0 7px 0 6px;
    background: #1c1b22;
    border-radius: 4px;
    color: #e8e8ec;
}
.fox-url-text {
    margin-left: 1px;
}
.fox-star {
    margin-left: auto;
}
.fox-extras {
    display: flex;
    align-items: center;
    flex: 1;
    justify-content: flex-end;
    gap: 16px;
    padding-right: 14px;
}
.bookmarks {
    display: grid;
    grid-template-columns: 89px 76px 160px 160px 99px 160px 107px repeat(6, 160px) 1fr;
    align-items: center;
    height: 29px;
    padding: 0 12px 1px 11px;
    font-size: 12.5px;
    white-space: nowrap;
    background: #2b2a33;
    border-bottom: 1px solid #000;
}
.bm {
    display: flex;
    align-items: center;
    gap: 5px;
    min-width: 0;
    overflow: hidden;
}
.bm svg {
    flex: none;
    width: 16px;
    height: 16px;
}
.bm-more {
    width: 14px;
    height: 14px;
    justify-self: end;
}

.lab-page {
    flex: 1;
    min-height: 0;
    background: #fff;
    overflow: hidden;
}
.lab-head {
    display: flex;
    align-items: flex-start;
    height: 142px;
    padding-top: 22px;
}
.academy-logo {
    width: 205px;
    height: 62px;
    padding-left: 3px;
    font-family: Lato, sans-serif;
    font-size: 36px;
    line-height: 32px;
    letter-spacing: -1.2px;
    color: #000;
    border-right: 1px solid #e6e6e6;
    white-space: nowrap;
}
.academy-line2 {
    display: flex;
    align-items: flex-start;
}
.academy-word {
    width: 134px;
    height: 34px;
    border-bottom: 2px solid #ff6633;
}
.academy-bolt {
    display: block;
    width: 32px;
    height: 30px;
    margin: 3px 0 0 13px;
    border: 2px solid #ff6633;
    border-radius: 2px;
}
.academy-bolt svg {
    display: block;
    width: 100%;
    height: 100%;
}
.lab-title {
    margin-left: 17px;
}
.lab-title h2 {
    margin: 0;
    font-size: 24px;
    font-weight: 400;
    line-height: 16px;
}
.lab-back {
    display: flex;
    align-items: center;
    gap: 6px;
    margin-top: 28px;
    line-height: 16px;
    color: #b3b3b3;
}
.lab-status {
    display: flex;
    align-items: center;
    width: 183px;
    height: 32px;
    margin-left: auto;
    padding: 1px 0;
    background: #70d16d;
    border-radius: 16px;
}
.lab-tag {
    width: 48px;
    font-weight: 700;
    text-align: center;
}
.lab-state {
    width: 98px;
    height: 30px;
    padding-left: 8px;
    line-height: 30px;
    background: #fff;
}
.lab-flask {
    width: 16px;
    height: 24px;
    margin-left: 7px;
}
.solved-banner {
    height: 129px;
    color: #fff;
    background: #ff6633;
}
.solved-row {
    display: flex;
    align-items: center;
    justify-content: space-between;
}
.solved-row.first {
    padding: 14px 0 16px;
}
.solved-row.second {
    padding: 13px 0 17px;
}
.solved-row h4 {
    margin: 0;
    font-size: 23.3px;
    font-weight: 400;
}
.solved-links {
    display: flex;
    align-items: center;
    gap: 14px;
}
.share {
    display: flex;
    align-items: center;
    gap: 6px;
    width: 186px;
    height: 32px;
    padding-left: 16px;
    font-weight: 700;
    background: #333332;
}
.second .share {
    height: 37px;
}
.cont {
    display: flex;
    align-items: center;
    gap: 5px;
}
.account {
    padding-top: 33px;
}
.acct-nav {
    display: flex;
    justify-content: flex-end;
    gap: 10px;
    line-height: 16px;
    color: #0071bc;
}
.acct-nav span {
    color: #333332;
}
.account h1 {
    margin: 43px 0 0;
    font-size: 40px;
    font-weight: 400;
    line-height: 46px;
    color: #0071bc;
}
.account p {
    margin: 22px 0 0;
    line-height: 16px;
}
.account p + p {
    margin-top: 16px;
}
.email-form {
    display: flex;
    flex-direction: column;
    align-items: flex-start;
    width: 700px;
    height: 170px;
    margin-top: 14px;
    padding: 20px 16px 32px;
    background: #ebf0f2;
}
.email-form label {
    line-height: 16px;
    color: #999;
}
.email-form input {
    width: 100%;
    height: 32px;
    margin-top: 5px;
    background: #fff;
    border: 1px solid #e6e6e6;
}
.email-form button {
    width: 132px;
    height: 32px;
    margin-top: 33px;
    padding: 0;
    font-family: inherit;
    font-size: 16px;
    font-weight: 700;
    color: #fff;
    background: #189a7e;
    border: 0;
    border-radius: 16px;
}

/* taskbars */
.taskbar {
    display: grid;
    flex: none;
    grid-template-columns: 1fr auto 1fr;
    height: 48px;
    padding-top: 4px;
    background: #173638;
}
.taskbar.tall {
    height: 60px;
    background: radial-gradient(ellipse 420px 120px at 640px 40px, #344c4c, #1e3a3c);
}
.tb-icons {
    display: flex;
    align-items: flex-start;
}
.tb-item {
    position: relative;
    display: flex;
    align-items: center;
    justify-content: center;
    width: 44px;
    height: 40px;
}
.tb-item svg {
    width: 24px;
    height: 22px;
}
.tb-item svg.tb-tall {
    height: 28px;
    margin-top: -6px;
}
.tb-item.current {
    background: rgba(255, 255, 255, .09);
    border-radius: 4px;
}
.tb-item.run::after, .tb-item.current::after {
    content: "";
    position: absolute;
    bottom: 2px;
    left: 20px;
    width: 4px;
    height: 3px;
    background: #8c9a9a;
    border-radius: 2px;
}
.tb-item.current::after {
    left: 14px;
    width: 16px;
    background: #2a9aa0;
}
.tb-tray {
    display: flex;
    align-items: center;
    justify-content: flex-end;
    height: 40px;
    padding-right: 20px;
    color: #fff;
}
.tray-chev {
    width: 12px;
    height: 12px;
    margin-right: 16px;
}
.tray-ic {
    width: 18px;
    height: 18px;
    margin-right: 6px;
}
.clock {
    margin-left: 16px;
    font-size: 12px;
    line-height: 18px;
    text-align: right;
}
.tall .clock {
    line-height: 16px;
}
```
